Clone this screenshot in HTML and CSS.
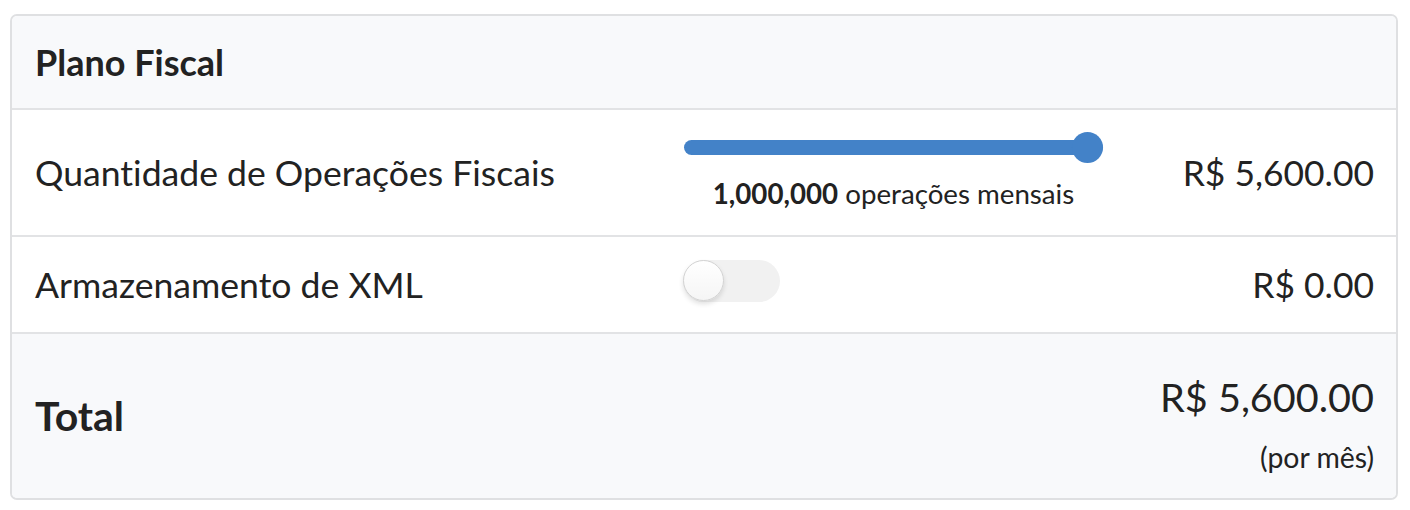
FILE: index.html
```html
<!DOCTYPE html>
<html lang="pt">
<head>
<meta charset="utf-8">
<link rel="stylesheet" href="styles.css">
</head>
<body>
<div class="card">
  <div class="card-header">Plano Fiscal</div>
  <div class="row row-ops">
    <div class="label">Quantidade de Operações Fiscais</div>
    <div class="control">
      <div class="slider">
        <div class="track"></div>
        <div class="thumb"></div>
      </div>
      <div class="slider-caption"><strong>1,000,000</strong> operações mensais</div>
    </div>
    <div class="price">R$ 5,600.00</div>
  </div>
  <div class="row row-xml">
    <div class="label">Armazenamento de XML</div>
    <div class="control">
      <div class="toggle"><div class="knob"></div></div>
    </div>
    <div class="price">R$ 0.00</div>
  </div>
  <div class="total">
    <div class="total-label">Total</div>
    <div class="total-values">
      <div class="total-price">R$ 5,600.00</div>
      <div class="total-period">(por mês)</div>
    </div>
  </div>
</div>
</body>
</html>
```
FILE: styles.css
```css
* { box-sizing: border-box; }
html, body { margin: 0; padding: 0; background: #fff; }
body {
  padding: 14px 0 0 10px;
  font-family: Lato, "Open Sans", sans-serif;
  font-variant-ligatures: no-common-ligatures;
  color: #222;
}
.card {
  width: 1388px;
  border: 2px solid #dfe0e2;
  border-radius: 7px;
  overflow: hidden;
}
.card-header {
  background: #f8f9fb;
  height: 94px;
  display: flex;
  align-items: center;
  padding: 0 22px 0 23px;
  font-size: 36px;
  font-weight: 700;
  border-bottom: 2px solid #e2e3e5;
}
.row {
  display: grid;
  grid-template-columns: 649px 419px 1fr;
  align-items: center;
  padding: 0 22px 0 23px;
  border-bottom: 2px solid #e2e3e5;
}
.row-ops { height: 127px; }
.row-xml { height: 97px; }
.label { font-size: 35.6px; }
.price { font-size: 35.4px; text-align: right; }
.control { display: flex; flex-direction: column; align-items: flex-start; }
.row-ops .control { align-items: stretch; padding-bottom: 2px; }
.slider {
  position: relative;
  height: 31px;
}
.track {
  position: absolute;
  left: 0; right: 0; top: 8px;
  height: 15px;
  border-radius: 8px;
  background: #4382c8;
}
.thumb {
  position: absolute;
  right: 0; top: 0;
  width: 31px; height: 31px;
  border-radius: 50%;
  background: #4382c8;
}
.slider-caption {
  text-align: center;
  font-size: 27.7px;
  line-height: 1.2;
  margin-top: 14px;
  color: #222;
}
.slider-caption strong { font-weight: 700; }
.toggle {
  position: relative;
  width: 97px; height: 42px;
  border-radius: 21px;
  background: #f1f1f1;
  margin-left: -1px;
  margin-bottom: 8px;
}
.knob {
  position: absolute;
  left: 0; top: 0;
  width: 41px; height: 41px;
  border-radius: 50%;
  background: linear-gradient(#fff, #f5f5f5);
  border: 1px solid #d3d3d3;
  box-shadow: 0 3px 5px rgba(0,0,0,0.12);
}
.total {
  background: #f8f9fb;
  height: 164px;
  display: flex;
  justify-content: space-between;
  align-items: center;
  padding: 0 22px 0 23px;
}
.total-label { font-size: 41px; font-weight: 700; line-height: 1.2; }
.total-values { text-align: right; padding-top: 15px; }
.total-price { font-size: 39.6px; line-height: 1.2; }
.total-period { font-size: 28.4px; line-height: 1.2; margin-top: 19px; }
```
